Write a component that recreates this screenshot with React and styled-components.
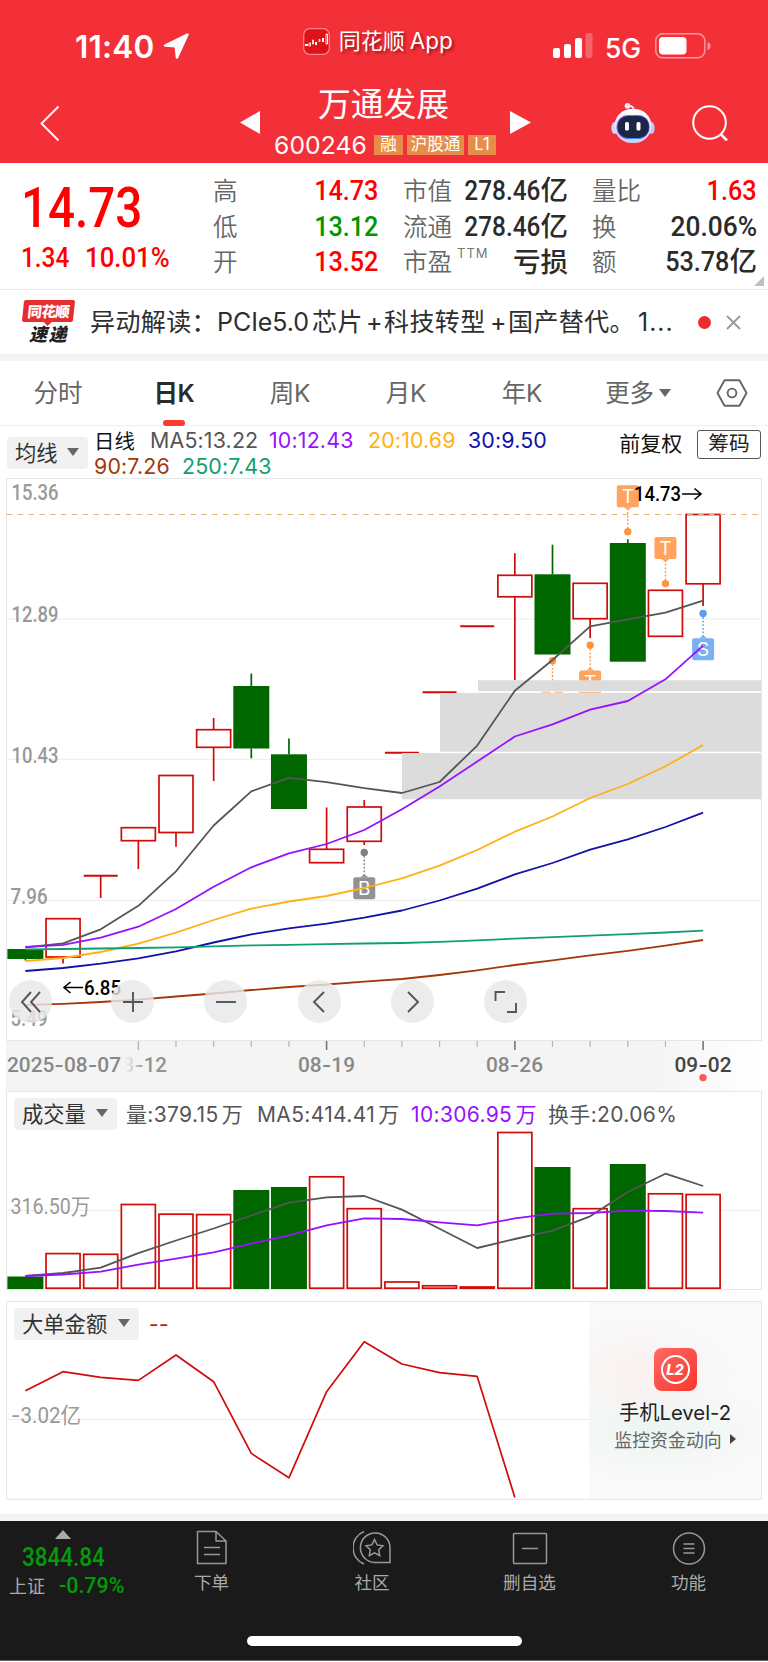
import React from "react";
import styled, { createGlobalStyle } from "styled-components";

const cjk = `"Noto Sans CJK SC", sans-serif`;
const RED = "#d10a0a";
const GREEN = "#006600";

const GlobalStyle = createGlobalStyle`
  * { box-sizing: border-box; }
  body { margin: 0; background: #fff; }
  svg { display: block; flex: none; }
`;

const Page = styled.div`
  width: 768px;
  height: 1662px;
  overflow: hidden;
  display: flex;
  flex-direction: column;
  background: #fff;
  color: #333;
  font-family: Inter, ${cjk};
  white-space: nowrap;
`;

/* Narrow numerals: Roboto squeezed horizontally, anchored on one side. */
const Num = styled.span`
  display: inline-block;
  font-family: Roboto, ${cjk};
  font-weight: 500;
  transform: scaleX(${(p) => p.$sx || 0.87});
  transform-origin: ${(p) => p.$from || "right"} center;
`;

/* ---------- header ---------- */
const Header = styled.header`
  height: 163px;
  flex: none;
  background: #f33038;
  color: #fff;
`;
const StatusBar = styled.div`
  height: 78px;
  padding: 0 56px 0 75px;
  display: flex;
  align-items: flex-start;
`;
const Clock = styled.span`
  width: 87px;
  margin-top: 28px;
  font-size: 31.5px;
  line-height: 38px;
  font-weight: 600;
  letter-spacing: 0.2px;
`;
const AppTag = styled.div`
  margin: 25px 0 0 113px;
  width: 251px;
  height: 32px;
  display: flex;
  align-items: center;
  gap: 9px;
  font-size: 22px;
  line-height: 32px;
  text-shadow: 2px 2px 3px rgba(90, 0, 0, 0.6);
  span { margin-left: -4px; font-size: 22.5px; }
`;
const Carrier = styled.span`
  margin: 30px 14px 0 12px;
  width: 36px;
  font-size: 26.5px;
  line-height: 36px;
  font-weight: 500;
  letter-spacing: -0.3px;
`;
const TitleBar = styled.div`
  height: 85px;
  padding: 0 40px;
  display: flex;
  align-items: flex-start;
`;
const TitleBlock = styled.div`
  width: 251px;
  display: flex;
  flex-direction: column;
  align-items: center;
`;
const StockName = styled.h1`
  margin: 0 3px 0 0;
  font: 400 32.8px/46px ${cjk};
  height: 54px;
  padding-top: 1px;
`;
const CodeRow = styled.div`
  display: flex;
  align-items: center;
  gap: 4px;
  height: 26px;
`;
const Code = styled.span`
  width: 96px;
  font-size: 24.7px;
  line-height: 26px;
  letter-spacing: 0.1px;
`;
const Badge = styled.span`
  width: ${(p) => p.$w}px;
  height: 20px;
  background: #e68d49;
  font-size: 16.6px;
  line-height: 19px;
  text-align: center;
`;

/* ---------- quote ---------- */
const Quote = styled.section`
  height: 127px;
  flex: none;
  border-bottom: 1px solid #e9e9e9;
  display: flex;
  position: relative;
`;
const PriceBlock = styled.div`
  width: 213px;
  padding: 12px 0 0 21px;
  color: #ff0000;
`;
const Price = styled.div`
  font-size: 55px;
  line-height: 64px;
  height: 66px;
`;
const Change = styled.div`
  display: flex;
  font-size: 28px;
  line-height: 34px;
  span:first-child { width: 64px; }
`;
const StatColumn = styled.dl`
  margin: 9px ${(p) => p.$gap}px 0 0;
  width: ${(p) => p.$w}px;
`;
const Stat = styled.div`
  height: 35.5px;
  display: flex;
  justify-content: space-between;
  align-items: center;
  dt {
    font: 350 24.5px/35px ${cjk};
    color: #666;
  }
  dd {
    margin: 0;
    font: 500 27.5px/35px ${cjk};
    color: ${(p) => p.$color || "#2b2b2b"};
  }
  dd span { font-size: 28px; }
  sup {
    font: 400 13px/13px Inter;
    letter-spacing: 1px;
    color: #777;
    margin-left: 5px;
    vertical-align: 13px;
  }
`;
const Corner = styled.i`
  position: absolute;
  right: 4px;
  bottom: 3px;
  border: 5px solid;
  border-color: transparent #c0c0c0 #c0c0c0 transparent;
`;

/* ---------- news ---------- */
const News = styled.section`
  height: 64px;
  flex: none;
  padding-left: 22px;
  display: flex;
  align-items: center;
`;
const Logo = styled.div`
  width: 53px;
  height: 44px;
  display: flex;
  flex-direction: column;
  align-items: center;
  font: italic 900 16px/20px ${cjk};
`;
const LogoTop = styled.div`
  width: 51px;
  height: 22px;
  border-radius: 2px;
  background: #e72d30;
  color: #fff;
  font-size: 14.5px;
  line-height: 21px;
  font-style: normal;
  text-align: center;
  transform: skewX(-6deg);
  letter-spacing: -0.6px;
  position: relative;
  &::after {
    content: "";
    position: absolute;
    left: 22px;
    top: 22px;
    border: 4px solid transparent;
    border-top-color: #e72d30;
    border-bottom: 0;
  }
`;
const LogoBottom = styled.div`
  font-size: 18px;
  line-height: 22px;
  letter-spacing: 1.5px;
  color: #222;
`;
const Headline = styled.p`
  margin: 0 0 0 15px;
  width: 599px;
  font-size: 25px;
  line-height: 36px;
  color: #2e2e2e;
  display: flex;
  font-weight: 400;
`;
const Piece = styled.span`
  width: ${(p) => p.$w}px;
  flex: none;
  letter-spacing: ${(p) => p.$ls || 0.4}px;
`;
const Dot = styled.i`
  width: 13px;
  height: 13px;
  border-radius: 50%;
  background: #ea2e30;
  margin: 0 15px 0 9px;
`;
const Band = styled.div`
  height: 7px;
  flex: none;
  background: #f4f4f4;
`;

/* ---------- tabs ---------- */
const Tabs = styled.nav`
  height: 65px;
  flex: none;
  display: flex;
  border-bottom: 1px solid #efefef;
`;
const Tab = styled.div`
  width: 116px;
  height: 65px;
  padding-top: 11px;
  display: flex;
  flex-direction: column;
  align-items: center;
  font-size: 24.5px;
  line-height: 42px;
  font-weight: ${(p) => (p.$active ? 600 : 400)};
  color: ${(p) => (p.$active ? "#2b2b2b" : "#666")};
  span { display: flex; align-items: center; gap: 5px; letter-spacing: -0.3px; }
  &::after {
    content: "";
    width: 22px;
    height: 6px;
    margin-top: 6px;
    border-radius: 3px;
    background: ${(p) => (p.$active ? "#fb3a30" : "transparent")};
  }
`;
const Settings = styled.div`
  width: 72px;
  padding: 18px 0 0 20px;
`;
const Caret = styled.i`
  width: 0;
  height: 0;
  border: 5.5px solid transparent;
  border-width: 8px 6px 0;
  border-top-color: #666;
`;

/* ---------- averages ---------- */
const Averages = styled.section`
  height: 52px;
  flex: none;
  padding: 1px 7px 0;
  display: flex;
  align-items: flex-start;
`;
const Picker = styled.button`
  border: 0;
  border-radius: 4px;
  background: #f1f1f1;
  width: ${(p) => p.$w}px;
  height: 32px;
  padding: 0 9px 3px 8px;
  display: flex;
  align-items: center;
  justify-content: space-between;
  flex: none;
  font: 400 21.3px/28px ${cjk};
  color: #333;
`;
const AverageList = styled.div`
  margin: 1px 0 0 6px;
  width: 526px;
  display: flex;
  flex-wrap: wrap;
  font-size: 21.4px;
  line-height: 24.5px;
  span { letter-spacing: 0.15px; }
`;
const Value = styled.span`
  color: ${(p) => p.$color};
  width: ${(p) => p.$w}px;
  flex: none;
  b { font: 400 20.4px/24px ${cjk}; }
`;
const Adjust = styled.span`
  margin-top: 4px;
  width: 78px;
  font-size: 21px;
  line-height: 26px;
  color: #111;
`;
const Outlined = styled.span`
  margin-top: 3px;
  width: 64px;
  height: 29px;
  border: 1px solid #555;
  border-radius: 3px;
  text-align: center;
  font-size: 20.7px;
  line-height: 26px;
  color: #222;
`;

/* ---------- charts ---------- */
const Panel = styled.section`
  margin: 0 6px ${(p) => p.$gap || 0}px;
  height: ${(p) => p.$h}px;
  flex: none;
  border: 1px solid #e6e6e6;
  position: relative;
  display: flex;
`;
const Plot = styled.div`
  width: ${(p) => p.$w || 754}px;
  flex: none;
`;
const PlotHead = styled.div`
  height: 39px;
  padding: 6px 0 0 7px;
  display: flex;
  font-size: 21px;
  line-height: 34px;
  color: #555;
`;
const HeadValue = styled.span`
  width: ${(p) => p.$w}px;
  margin-left: ${(p) => p.$ml || 0}px;
  color: ${(p) => p.$color || "#555"};
  letter-spacing: 0.35px;
  word-spacing: -3px;
`;
const Controls = styled.div`
  position: absolute;
  left: 2px;
  bottom: 17px;
  display: flex;
  gap: 50.2px;
  button:first-child { margin-right: 9px; }
`;
const Control = styled.button`
  width: 43px;
  height: 43px;
  padding: 0;
  border: 0;
  border-radius: 50%;
  background: rgba(232, 232, 232, 0.82);
  display: grid;
  place-items: center;
`;
const Axis = styled.div`
  height: 50px;
  flex: none;
  margin: 0 6px;
  background: linear-gradient(90deg, #f4f4f4 85%, #fff 100%);
`;
const Promo = styled.aside`
  flex: 1;
  background:
    radial-gradient(ellipse 90px 50px at 30% 35%, rgba(255, 225, 225, 0.35), transparent),
    radial-gradient(ellipse 110px 50px at 40% 65%, rgba(220, 240, 230, 0.45), transparent),
    #f9f9f9;
  display: flex;
  flex-direction: column;
  align-items: center;
  padding-top: 46px;
`;
const PromoTitle = styled.div`
  margin-top: 8px;
  font-size: 20.3px;
  line-height: 28px;
  color: #222;
`;
const PromoLink = styled.div`
  display: flex;
  align-items: center;
  gap: 8px;
  font: 400 17.9px/24px ${cjk};
  color: #666;
  i {
    border: 5.5px solid transparent;
    border-left: 6px solid #444;
    border-right: 0;
  }
`;

/* ---------- bottom bar ---------- */
const Bottom = styled.footer`
  height: 140px;
  flex: none;
  background: #1a1a1a;
  color: #aaa;
  border-bottom: 1px solid #666;
`;
const BottomRow = styled.div`
  height: 115px;
  display: flex;
`;
const Index = styled.div`
  width: 132px;
  padding: 9px 0 0 9px;
`;
const Up = styled.i`
  display: block;
  width: 0;
  margin-left: 46px;
  border: 8px solid transparent;
  border-bottom: 9.5px solid #aaa;
  border-top: 0;
`;
const IndexValue = styled.div`
  margin: 3px 0 0 13px;
  height: 28px;
  color: #009e05;
  font-size: 25.5px;
  line-height: 30px;
`;
const IndexChange = styled.div`
  height: 30px;
  display: flex;
  align-items: center;
  gap: 14px;
  font-size: 18px;
  span { color: #009e05; font-size: 22.5px; }
`;
const NavItem = styled.div`
  width: 159px;
  padding: 9px 0 0 ${(p) => p.$shift || 0}px;
  display: flex;
  flex-direction: column;
  align-items: center;
  font: 400 17.6px/26px ${cjk};
  gap: 3px;
`;
const HomeBar = styled.div`
  width: 275px;
  height: 10px;
  border-radius: 5px;
  margin: 0 auto;
  background: #fff;
`;

/* ---------- chart data, in plot pixels ---------- */
const cx = (i) => 25.4 + 37.65 * i;
const HALF = 17;

const candles = [
  ["g", 949, 959, 949, 960.5], ["r", 918.7, 957, 918.7, 963.5], ["r", 875.7, 875.7, 875.7, 898],
  ["r", 827.7, 840.7, 827.7, 869], ["r", 775.5, 832.5, 775.5, 846.7], ["r", 729.7, 747.3, 718, 781],
  ["g", 686, 748.5, 673.5, 758.3], ["g", 754.3, 809, 738.5, 809], ["r", 849.3, 862.7, 807.5, 862.7],
  ["r", 807, 841.3, 800, 845], ["r", 752.7, 752.7, 752.7, 752.7], ["r", 692.3, 692.3, 692.3, 692.3],
  ["r", 626.2, 626.2, 626.2, 626.2], ["r", 575.3, 596.8, 553.3, 680], ["g", 574.3, 654.5, 544.7, 654.5],
  ["r", 583.3, 618.7, 583.3, 638], ["g", 543, 661.7, 539.3, 661.7], ["r", 590.3, 636.3, 590.3, 636.3],
  ["r", 514.5, 583.8, 514.5, 606],
];
const averages = {
  "#555555": [947.3, 943.3, 929.3, 905.8, 871.3, 825.5, 791.3, 777.8, 782.2, 788.2, 793, 782, 745.6, 690.7, 660, 626.4, 619.4, 612.7, 600.6],
  "#9611ff": [947, 944.8, 937.6, 926.7, 909, 886.8, 867.3, 853.4, 844, 830, 809.3, 786.4, 761.6, 736.5, 724.4, 709.6, 701, 679.3, 645.6],
  "#ffb014": [961, 958, 952, 943.6, 932.6, 920, 908.7, 901.5, 896, 888, 878.3, 865.7, 850, 831.7, 816.5, 798, 784, 766.3, 745],
  "#1212a8": [971, 968, 963.7, 958.3, 951.3, 942.5, 934.3, 928.3, 923.7, 917.7, 910.5, 900.5, 888.6, 874.4, 863, 849.6, 839.4, 827, 812.6],
  "#a3380a": [1004.8, 1003.8, 1002, 999.6, 996.5, 993.5, 990, 987, 984.5, 981.6, 979, 975, 970.4, 965, 960.3, 955.4, 950.8, 945.7, 940],
  "#10a070": [949.3, 949, 948.5, 948, 947.3, 946.4, 945.4, 944.8, 944.2, 943.5, 943, 941.8, 940.4, 938.6, 937.2, 935.6, 934.2, 932.5, 930.6],
};
const volumes = [1276.5, 1253.6, 1254.3, 1204.5, 1214.2, 1214.6, 1190, 1187, 1176.8, 1208.7, 1282, 1285.8, 1287, 1132.5, 1167, 1208.7, 1164, 1193.8, 1194.5];
const volumeAverages = {
  "#555555": [1276, 1273, 1267.6, 1253.2, 1240.5, 1228.5, 1215.5, 1202.7, 1197.3, 1196, 1209.6, 1228.7, 1248, 1239, 1230.6, 1216.3, 1192, 1173.7, 1186],
  "#9611ff": [1276, 1274.5, 1271.6, 1264.6, 1258.6, 1252.3, 1243.7, 1235.3, 1225.3, 1218.4, 1219, 1222.4, 1225.4, 1218.4, 1213.7, 1213, 1210.6, 1211, 1212.7],
};
const largeOrders = [1390.7, 1371.7, 1377.3, 1380.4, 1355, 1381.7, 1453.4, 1477.8, 1391.7, 1341.8, 1364, 1372.7, 1376.4, 1497.5];

const Line = ({ ys, color, w = 1.8 }) => (
  <polyline fill="none" stroke={color} strokeWidth={w} strokeLinejoin="round" points={ys.map((y, i) => `${cx(i)},${y}`).join(" ")} />
);

const ChartText = styled.text`
  font-family: Roboto, ${cjk};
  font-weight: ${(p) => p.$weight || 500};
  font-size: ${(p) => p.$size || 21.5}px;
  tspan { font-family: Inter, sans-serif; }
`;
const Fitted = ({ x, y, w, size, weight, fill = "#999", children }) => (
  <ChartText x={x} y={y} textLength={w} lengthAdjust="spacingAndGlyphs" fill={fill} $size={size} $weight={weight}>
    {children.split(/(-)/).map((part, i) => (i % 2 ? <tspan key={i}>{part}</tspan> : part))}
  </ChartText>
);

const Candle = ({ i, c }) => {
  const [kind, top, bottom, high, low] = c;
  const x = cx(i);
  const stroke = kind === "g" ? GREEN : RED;
  return (
    <g stroke={stroke} strokeWidth="1.7">
      {high < top && <path d={`M${x} ${high}V${top}`} />}
      {low > bottom && <path d={`M${x} ${bottom}V${low}`} />}
      {top === bottom ? (
        <path d={`M${x - HALF} ${top}h${HALF * 2}`} strokeWidth="2" />
      ) : kind === "g" ? (
        <rect x={x - 18} y={top} width="36" height={bottom - top} fill={GREEN} stroke="none" />
      ) : (
        <rect x={x - HALF} y={top} width={HALF * 2} height={bottom - top} fill="#fff" />
      )}
    </g>
  );
};

const Marker = ({ i, box, dot, letter, fill, dotFill }) => {
  const x = cx(i);
  const below = box > dot;
  const edge = below ? box : box + 22;
  return (
    <g>
      <path d={`M${x} ${dot}V${edge}`} stroke={dotFill} strokeWidth="1.4" strokeDasharray="1.8 1.8" />
      <circle cx={x} cy={dot} r="3.7" fill={dotFill} />
      <rect x={x - 11} y={box} width="22" height="22" rx="2" fill={fill} />
      <path d={below ? `M${x - 4} ${edge}l4 -3l4 3z` : `M${x - 4} ${edge}l4 3l4 -3z`} fill={fill} />
      <text x={x} y={box + 18} textAnchor="middle" fontFamily="Inter" fontSize="19" fill="#fff">{letter}</text>
    </g>
  );
};

const MainChart = () => (
  <svg width="754" height="561" viewBox="7 479 754 561">
    <path d="M7 619H761M7 759.3H761M7 900.3H761" stroke="#ebebeb" />
    {candles.map((c, i) => <Candle key={i} i={i} c={c} />)}
    <path d="M7 514.5H761" stroke="#e3b27a" strokeWidth="1.2" strokeDasharray="5.4 5.4" />
    <Marker i={15} box={670.5} dot={645.3} letter="T" fill="#ffa35f" dotFill="#ff9440" />
    <Marker i={14} box={683} dot={660.7} letter="" fill="#ffa35f" dotFill="#ff9440" />
    <g>
      <path d="M478 680.3H761V799.3H402V753H440V693H478z" fill="#dcdcdc" />
      <path d="M478 692.1H761M440 752.5H761" stroke="#fff" strokeWidth="1.6" />
      <path d="M541.5 692.3h9M554 692.3h9M579 692.3h22" stroke="#ffc08f" strokeWidth="1.3" />
    </g>
    <Marker i={16} box={485.3} dot={531.8} letter="T" fill="#ffa35f" dotFill="#ff9440" />
    <Marker i={17} box={537} dot={583.6} letter="T" fill="#ffa35f" dotFill="#ff9440" />
    <Marker i={18} box={638.3} dot={613.5} letter="S" fill="#7ab0f2" dotFill="#5b9df0" />
    <Marker i={9} box={877.3} dot={852.4} letter="B" fill="#929292" dotFill="#808080" />
    {Object.entries(averages).map(([color, ys]) => <Line key={color} ys={ys} color={color} />)}
    <Fitted x="11.500" y="500" w="47">15.36</Fitted>
    <Fitted x="11.500" y="622" w="47">12.89</Fitted>
    <Fitted x="11.500" y="763" w="47">10.43</Fitted>
    <Fitted x="10.500" y="903.5" w="37">7.96</Fitted>
    <Fitted x="10.500" y="1026" w="37">5.49</Fitted>
    <Fitted x="634" y="501" w="47" size={20.5} fill="#000">14.73</Fitted>
    <path d="M682 494h19M694.5 488.5l6.5 5.5l-6.5 5.5" fill="none" stroke="#000" strokeWidth="1.6" />
    <Fitted x="84" y="994.5" w="37" size={20.5} fill="#000">6.85</Fitted>
    <path d="M83 987.5H64M70.500 982l-6.500 5.500l6.500 5.500" fill="none" stroke="#000" strokeWidth="1.6" />
  </svg>
);

const DateAxis = () => (
  <svg width="756" height="50" viewBox="6 1041 756 50">
    <defs>
      <linearGradient id="fade">
        <stop offset="0.05" stopColor="#888" stopOpacity="0" />
        <stop offset="0.25" stopColor="#888" stopOpacity="0.35" />
        <stop offset="0.5" stopColor="#888" stopOpacity="0.9" />
      </linearGradient>
    </defs>
    {Array.from({ length: 16 }, (_, k) => k + 3).map((i) => (
      <path key={i} d={`M${cx(i)} 1041v${(i - 3) % 5 ? 6 : 9}`} stroke={i === 3 ? "#bbb" : (i - 3) % 5 ? "#b5b5b5" : "#777"} strokeWidth={(i - 3) % 5 ? 1.2 : 1.6} />
    ))}
    <Fitted x="7" y="1072" w="114" size={21} fill="#888">2025-08-07</Fitted>
    <Fitted x="122.5" y="1072" w="44.500" size={21} fill="url(#fade)">8-12</Fitted>
    <Fitted x="298" y="1072" w="57" size={21} fill="#888">08-19</Fitted>
    <Fitted x="486" y="1072" w="57" size={21} fill="#888">08-26</Fitted>
    <Fitted x="674.5" y="1072" w="57" size={21} fill="#444">09-02</Fitted>
    <circle cx="703" cy="1077.6" r="3.7" fill="#f25c5c" />
  </svg>
);

const VolumeChart = () => (
  <svg width="754" height="158" viewBox="7 1131 754 158">
    <path d="M7 1210.3H761" stroke="#ebebeb" />
    {volumes.map((top, i) =>
      candles[i][0] === "g" ? (
        <rect key={i} x={cx(i) - 18} y={top} width="36" height={1289 - top} fill={GREEN} />
      ) : (
        <rect key={i} x={cx(i) - HALF} y={top} width={HALF * 2} height={1288.2 - top} fill="#fff" stroke={RED} strokeWidth="1.7" />
      )
    )}
    {Object.entries(volumeAverages).map(([color, ys]) => <Line key={color} ys={ys} color={color} />)}
    <Fitted x="10.5" y="1213.5" w="80" weight={400}>316.50万</Fitted>
  </svg>
);

const OrderChart = () => (
  <svg width="582" height="158" viewBox="7 1341 582 158" overflow="visible">
    <path d="M7 1419.5H589" stroke="#ebebeb" />
    <Line ys={largeOrders} color={RED} w={1.7} />
    <Fitted x="11" y="1422.8" w="70" weight={400}>-3.02亿</Fitted>
  </svg>
);

const Robot = () => (
  <svg width="44" height="42" viewBox="0 0 44 42">
    <defs>
      <linearGradient id="shell" x2="0" y2="1"><stop offset="0" stopColor="#fff" /><stop offset="1" stopColor="#ccd0f6" /></linearGradient>
      <linearGradient id="rim"><stop offset="0" stopColor="#b44cf0" /><stop offset="0.5" stopColor="#3a8df0" /><stop offset="1" stopColor="#7a50e8" /></linearGradient>
    </defs>
    <path d="M17 4q6-0.500 6 5" fill="none" stroke="#e8eaff" strokeWidth="1.8" />
    <circle cx="16.500" cy="3.800" r="2.900" fill="#e9ecff" />
    <ellipse cx="3.5" cy="26" rx="3.2" ry="6" fill="#cfd5f8" />
    <ellipse cx="40.5" cy="26" rx="3.2" ry="6" fill="#bfc6f4" />
    <rect x="3.5" y="7" width="37" height="34" rx="17" fill="url(#shell)" />
    <rect x="5.500" y="13" width="33" height="24" rx="11.5" fill="url(#rim)" />
    <rect x="6.5" y="14" width="31.5" height="22" rx="10.5" fill="#1c2647" />
    <rect x="14" y="20" width="4" height="8.5" rx="1.5" fill="#fff" />
    <rect x="25.5" y="20" width="4" height="8.5" rx="1.5" fill="#fff" />
  </svg>
);

const controlPaths = [
  "M20 10L11 20L20 30M29 10L20 20L29 30",
  "M20 10V30M10 20H30",
  "M10 20H30",
  "M25 10L15 20L25 30",
  "M16 10L26 20L16 30",
  "M10.5 19V10H20M22 30H31V21",
];

const NavIcon = styled.svg.attrs({ width: 38, height: 36, viewBox: "0 0 38 36" })`
  fill: none;
  stroke: #999;
  stroke-width: 1.5;
`;

const Push = styled.div`
  margin: ${(p) => p.$m};
`;
const Signal = styled.svg`
  margin-top: 33px;
`;

export default function App() {
  return (
    <Page>
      <GlobalStyle />
      <Header>
        <StatusBar>
          <Clock>11:40</Clock>
          <Push $m="33px 0 0 1px">
            <svg width="27" height="27" viewBox="0 0 27 27"><path d="M24.5 1.5L14 24.5L12.7 13.2L2 12.5Z" fill="#fff" stroke="#fff" strokeWidth="2.5" strokeLinejoin="round" /></svg>
          </Push>
          <AppTag>
            <svg width="27" height="27" viewBox="0 0 27 27">
              <rect x="0.7" y="0.7" width="25.6" height="25.6" rx="6" fill="#e01218" stroke="#f4898d" strokeWidth="1.2" />
              <path d="M2 16h3v2H2zM12 14h2v3h-2zM19 10h2v4h-2z" fill="#fff" />
              <path d="M6 15h1.5v3H6zM9.5 12h1v4h-1zM16 11.5h1v2h-1zM23 6h1.5v10H23z" fill="none" stroke="#fff" strokeWidth="0.9" />
            </svg>
            同花顺 <span>App</span>
          </AppTag>
          <Signal width="40" height="26" viewBox="0 0 40 26">
            <g fill="#fff">
              <rect y="15" width="7" height="10" rx="2" />
              <rect x="11" y="11" width="7" height="14" rx="2" />
              <rect x="22" y="5" width="7" height="20" rx="2" />
              <rect x="32.5" width="7" height="25" rx="2" opacity="0.25" />
            </g>
          </Signal>
          <Carrier>5G</Carrier>
          <Signal width="57" height="26" viewBox="0 0 57 26">
            <rect x="0.8" y="0.8" width="49" height="24" rx="7" fill="none" stroke="#fff" strokeOpacity="0.5" strokeWidth="1.5" />
            <rect x="4" y="4" width="27.5" height="17.5" rx="4" fill="#fff" />
            <path d="M52.5 9q3 1 3 4t-3 4z" fill="#fff" fillOpacity="0.5" />
          </Signal>
        </StatusBar>
        <TitleBar>
          <Push $m="27px 180px 0 0">
            <svg width="20" height="38" viewBox="0 0 20 38"><path d="M18.5 1.5L1.5 18.5L18.5 35.5" fill="none" stroke="#fff" strokeWidth="1.9" /></svg>
          </Push>
          <Push $m="33px 0 0">
            <svg width="20" height="24" viewBox="0 0 20 24"><path d="M0 11.5L20 0V23z" fill="#fff" /></svg>
          </Push>
          <TitleBlock>
            <StockName>万通发展</StockName>
            <CodeRow>
              <Code>600246</Code>
              <Badge $w={29}>融</Badge>
              <Badge $w={57}>沪股通</Badge>
              <Badge $w={28}>L1</Badge>
            </CodeRow>
          </TitleBlock>
          <Push $m="33px 80px 0 0">
            <svg width="21" height="24" viewBox="0 0 21 24"><path d="M21 11.5L0 0V23z" fill="#fff" /></svg>
          </Push>
          <Push $m="24px 36px 0 0"><Robot /></Push>
          <Push $m="27px 0 0 1px">
            <svg width="36" height="36" viewBox="0 0 36 36"><g fill="none" stroke="#fff" strokeWidth="2"><circle cx="17.5" cy="17.5" r="16.3" /><path d="M28.5 29L35 35.5" strokeWidth="2.5" /></g></svg>
          </Push>
        </TitleBar>
      </Header>

      <Quote>
        <PriceBlock>
          <Price><Num $from="left" $sx={0.865}>14.73</Num></Price>
          <Change><Num $from="left">1.34</Num><Num $from="left" $sx={0.92}>10.01%</Num></Change>
        </PriceBlock>
        <StatColumn $w={165} $gap={25}>
          <Stat $color="#ff0000"><dt>高</dt><dd><Num $sx={0.9}>14.73</Num></dd></Stat>
          <Stat $color="#009600"><dt>低</dt><dd><Num $sx={0.9}>13.12</Num></dd></Stat>
          <Stat $color="#ff0000"><dt>开</dt><dd><Num $sx={0.9}>13.52</Num></dd></Stat>
        </StatColumn>
        <StatColumn $w={165} $gap={24}>
          <Stat><dt>市值</dt><dd><Num>278.46</Num>亿</dd></Stat>
          <Stat><dt>流通</dt><dd><Num>278.46</Num>亿</dd></Stat>
          <Stat><dt>市盈<sup>TTM</sup></dt><dd>亏损</dd></Stat>
        </StatColumn>
        <StatColumn $w={165} $gap={0}>
          <Stat $color="#ff0000"><dt>量比</dt><dd><Num $sx={0.9}>1.63</Num></dd></Stat>
          <Stat><dt>换</dt><dd><Num $sx={0.94}>20.06%</Num></dd></Stat>
          <Stat><dt>额</dt><dd><Num $sx={0.9}>53.78</Num>亿</dd></Stat>
        </StatColumn>
        <Corner />
      </Quote>

      <News>
        <Logo>
          <LogoTop>同花顺</LogoTop>
          <LogoBottom>速递</LogoBottom>
        </Logo>
        <Headline>
          <Piece $w={127}>异动解读：</Piece>
          <Piece $w={95} $ls={-0.05}>PCIe5.0</Piece>
          <Piece $w={54}>芯片</Piece>
          <Piece $w={18}>+</Piece>
          <Piece $w={106}>科技转型</Piece>
          <Piece $w={18}>+</Piece>
          <Piece $w={130}>国产替代。</Piece>
          <Piece $w={50} $ls={1}>1...</Piece>
        </Headline>
        <Dot />
        <svg width="15" height="15" viewBox="0 0 15 15"><path d="M1 1L14 14M14 1L1 14" stroke="#999" strokeWidth="1.8" /></svg>
      </News>
      <Band />

      <Tabs>
        <Tab>分时</Tab>
        <Tab $active><span>日K</span></Tab>
        <Tab><span>周K</span></Tab>
        <Tab><span>月K</span></Tab>
        <Tab><span>年K</span></Tab>
        <Tab><span>更多<Caret /></span></Tab>
        <Settings>
          <svg width="32" height="28" viewBox="0 0 32 28"><g fill="none" stroke="#666" strokeWidth="1.9"><path d="M8.5 1.2H23.5L30.5 14L23.5 26.8H8.5L1.5 14Z" strokeLinejoin="round" /><circle cx="16" cy="14" r="4.4" /></g></svg>
        </Settings>
      </Tabs>

      <Averages>
        <Push $m="10px 0 0"><Picker $w={81}>均线<Caret /></Picker></Push>
        <AverageList>
          <Value $w={56} $color="#111"><b>日线</b></Value>
          <Value $w={119} $color="#555">MA5:13.22</Value>
          <Value $w={99} $color="#9611ff">10:12.43</Value>
          <Value $w={100} $color="#ffb014">20:10.69</Value>
          <Value $w={90} $color="#1212a8">30:9.50</Value>
          <Value $w={88} $color="#a3380a">90:7.26</Value>
          <Value $w={95} $color="#10a070">250:7.43</Value>
        </AverageList>
        <Adjust>前复权</Adjust>
        <Outlined>筹码</Outlined>
      </Averages>

      <Panel $h={563}>
        <MainChart />
        <Controls>
          {controlPaths.map((d) => (
            <Control key={d}>
              <svg width="40" height="40" viewBox="0 0 40 40"><path d={d} fill="none" stroke="#555" strokeWidth="1.9" /></svg>
            </Control>
          ))}
        </Controls>
      </Panel>
      <Axis><DateAxis /></Axis>

      <Panel $h={199} $gap={11}>
        <Plot>
          <PlotHead>
            <Picker $w={103}>成交量<Caret /></Picker>
            <HeadValue $w={131} $ml={9}>量:379.15 万</HeadValue>
            <HeadValue $w={154}>MA5:414.41 万</HeadValue>
            <HeadValue $w={137} $color="#9611ff">10:306.95 万</HeadValue>
            <HeadValue $w={140}>换手:20.06%</HeadValue>
          </PlotHead>
          <VolumeChart />
        </Plot>
      </Panel>

      <Panel $h={199} $gap={14}>
        <Plot $w={582}>
          <PlotHead>
            <Picker $w={125}>大单金额<Caret /></Picker>
            <HeadValue $w={40} $ml={10} $color={RED}>--</HeadValue>
          </PlotHead>
          <OrderChart />
        </Plot>
        <Promo>
          <svg width="43" height="43" viewBox="0 0 43 43">
            <defs><linearGradient id="l2" x2="1" y2="1"><stop offset="0" stopColor="#ff6a62" /><stop offset="1" stopColor="#f9362f" /></linearGradient></defs>
            <rect width="43" height="43" rx="8" fill="url(#l2)" />
            <circle cx="21.5" cy="21.5" r="13.5" fill="none" stroke="#fff" strokeWidth="2" />
            <text x="21" y="27" textAnchor="middle" fontFamily="Inter" fontStyle="italic" fontWeight="800" fontSize="14.5" fill="#fff">L2</text>
          </svg>
          <PromoTitle>手机Level-2</PromoTitle>
          <PromoLink>监控资金动向 <i /></PromoLink>
        </Promo>
      </Panel>
      <Band />

      <Bottom>
        <BottomRow>
          <Index>
            <Up />
            <IndexValue><Num $from="left" $sx={0.88}>3844.84</Num></IndexValue>
            <IndexChange>上证<Num $from="left" $sx={0.95}>-0.79%</Num></IndexChange>
          </Index>
          <NavItem>
            <NavIcon><path d="M4.500 1.5H23L33 11V33.5H4.500ZM23 1.5V11H33M11 17.5H27M11 24.5H27" strokeLinejoin="round" /></NavIcon>
            下单
          </NavItem>
          <NavItem $shift={3}>
            <NavIcon><path d="M37 18V32.5H21.5A14.8 14.8 0 1 1 37 18ZM11 1.5A17.5 17.5 0 0 0 11 34" /><path d="M21.5 9.5l2.6 5.4 5.9.8-4.3 4.1 1 5.900-5.2-2.8-5.2 2.8 1-5.9-4.3-4.1 5.9-.8z" /></NavIcon>
            社区
          </NavItem>
          <NavItem>
            <NavIcon><rect x="2.5" y="3.5" width="33" height="30" rx="1" /><path d="M11 18.5H27" /></NavIcon>
            删自选
          </NavItem>
          <NavItem>
            <NavIcon><circle cx="19" cy="18.5" r="15.5" /><path d="M13.500 14H24.5M13.5 18.5H24.5M13.5 23H24.5" /></NavIcon>
            功能
          </NavItem>
        </BottomRow>
        <HomeBar />
      </Bottom>
    </Page>
  );
}
